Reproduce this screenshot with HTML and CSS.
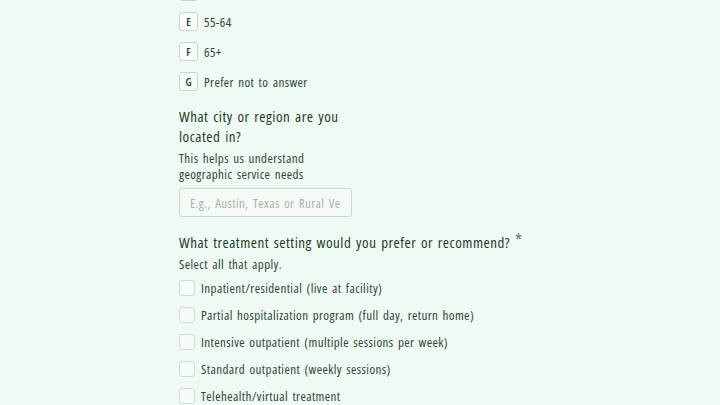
FILE: index.html
```html
<!DOCTYPE html>
<html lang="en">

<head>
    <meta charset="UTF-8">
    <meta name="viewport" content="width=device-width, initial-scale=1.0">
    <title>Survey</title>
    <link rel="stylesheet" href="styles.css">
</head>

<body>
    <div class="survey">
        <ul class="choices">
            <li><span class="key">D</span>45-54</li>
            <li><span class="key">E</span>55-64</li>
            <li><span class="key">F</span>65+</li>
            <li><span class="key">G</span>Prefer not to answer</li>
        </ul>

        <div class="question narrow">
            <h3>What city or region are you located in?</h3>
            <p class="hint">This helps us understand geographic service needs</p>
            <input class="field" type="text" placeholder="E.g., Austin, Texas or Rural Vermont">
        </div>

        <div class="question">
            <h3>What treatment setting would you prefer or recommend? <span class="req">*</span></h3>
            <p class="hint">Select all that apply.</p>
            <ul class="checks">
                <li><span class="box"></span>Inpatient/residential (live at facility)</li>
                <li><span class="box"></span>Partial hospitalization program (full day, return home)</li>
                <li><span class="box"></span>Intensive outpatient (multiple sessions per week)</li>
                <li><span class="box"></span>Standard outpatient (weekly sessions)</li>
                <li><span class="box"></span>Telehealth/virtual treatment</li>
            </ul>
        </div>
    </div>
</body>

</html>
```

FILE: styles.css
```css
* {
    margin: 0;
    padding: 0;
    box-sizing: border-box;
}

body {
    background: #f0faf4;
    font-family: "Open Sans", Lato, sans-serif;
    font-stretch: 75%;
    letter-spacing: 0.4px;
    word-spacing: 1.5px;
    color: #1f3a2b;
    overflow: hidden;
    height: 405px;
}

.survey {
    width: 420px;
    margin-left: 179px;
    margin-top: -18px;
}

.choices {
    list-style: none;
    display: flex;
    flex-direction: column;
    gap: 11px;
}

.choices li {
    display: flex;
    align-items: center;
    height: 19px;
    font-size: 13px;
    color: #2c4637;
}

.choices .key {
    width: 19px;
    height: 19px;
    margin-right: 6px;
    border: 1px solid #c9d6cd;
    border-radius: 3px;
    background: #f7fcf9;
    font-size: 11px;
    font-weight: 600;
    letter-spacing: 0;
    display: flex;
    align-items: center;
    justify-content: center;
    color: #1f3a2b;
}

.question {
    margin-top: 15px;
}

.question.narrow {
    width: 175px;
}

.question h3 {
    font-size: 15px;
    font-weight: 500;
    line-height: 20px;
    letter-spacing: 0.5px;
    color: #1f3a2b;
}

.question .req {
    color: #6f8275;
    font-size: 19px;
    line-height: 1;
    vertical-align: 0;
    letter-spacing: 0;
}

.hint {
    font-size: 13px;
    line-height: 16px;
    color: #2c4637;
    margin-top: 4px;
}

.field {
    display: block;
    width: 173px;
    height: 29px;
    margin-top: 6px;
    padding: 0 10px;
    border: 1px solid #cbd8cf;
    border-radius: 3px;
    background: #f4fbf7;
    font-family: inherit;
    font-stretch: inherit;
    letter-spacing: inherit;
    word-spacing: inherit;
    font-size: 13px;
    color: #1f3a2b;
}

.field::placeholder {
    color: #a6b3aa;
}

.checks {
    list-style: none;
    margin-top: 8px;
    display: flex;
    flex-direction: column;
    gap: 11px;
}

.checks li {
    display: flex;
    align-items: center;
    height: 16px;
    font-size: 13px;
    color: #2c4637;
}

.checks .box {
    width: 16px;
    height: 16px;
    margin-right: 6px;
    border: 1px solid #cfdbd3;
    border-radius: 3px;
    background: #f7fcf9;
}
```
